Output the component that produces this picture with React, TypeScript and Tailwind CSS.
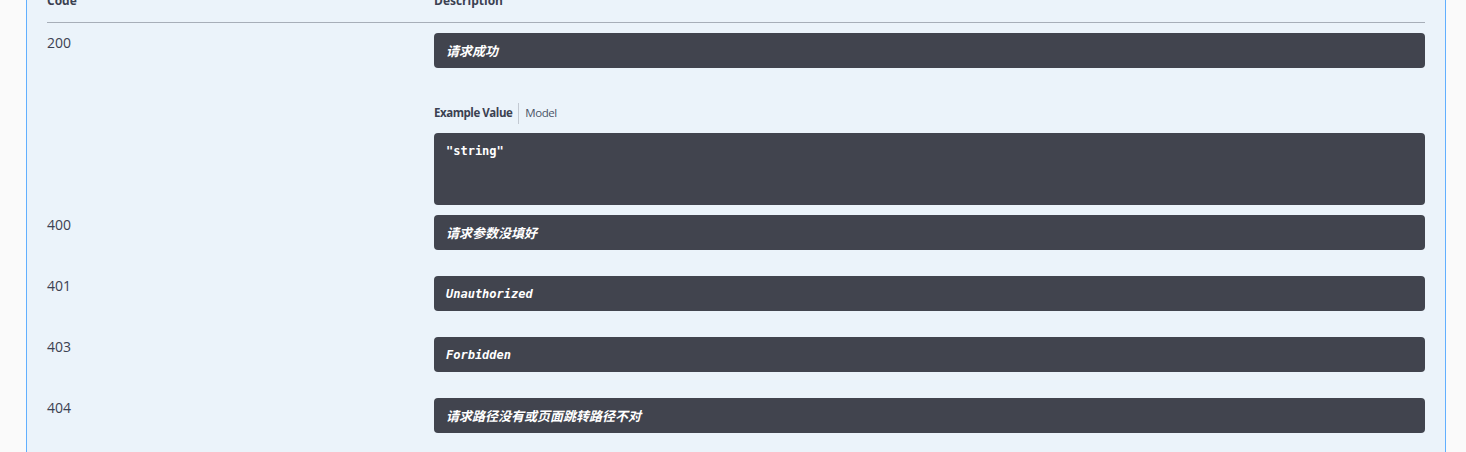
import React from "react";

const sans = "font-['Open_Sans','Noto_Sans_CJK_SC',sans-serif]";
const mono = "font-['DejaVu_Sans_Mono','Liberation_Mono','Noto_Sans_CJK_SC',monospace]";

function Desc({ text, cjk }: { text: string; cjk?: boolean }) {
  return (
    <div
      className={`h-[35px] rounded-[4px] bg-[#41444e] pl-[12px] flex items-center text-white font-bold italic ${
        cjk ? "text-[13px] font-['Noto_Sans_CJK_SC',sans-serif]" : `text-[12px] ${mono}`
      }`}
    >
      {text}
    </div>
  );
}

function Row({
  code,
  text,
  cjk,
  pt,
  children,
}: {
  code: string;
  text: string;
  cjk?: boolean;
  pt: string;
  children?: React.ReactNode;
}) {
  return (
    <div className={`flex ${pt} ${children ? "" : "pb-[15px]"}`}>
      <div className={`w-[387px] shrink-0 text-[14px] leading-[20px] text-[#3b4151] ${sans}`}>{code}</div>
      <div className="flex-1 min-w-0">
        <Desc text={text} cjk={cjk} />
        {children}
      </div>
    </div>
  );
}

export default function App() {
  return (
    <div className="w-[1466px] h-[452px] bg-[#fafafa] overflow-hidden pl-[26px] pr-[20px]">
      <div className="h-[480px] border-x border-[#61affe] bg-[#ebf3fa] px-[20px]">
        <div
          className={`flex -mt-[9px] pb-[11px] border-b border-[#a7aeb8] text-[12px] leading-[20px] font-bold text-[#3b4151] ${sans}`}
        >
          <div className="w-[387px] shrink-0">Code</div>
          <div>Description</div>
        </div>
        <Row code="200" text="请求成功" cjk pt="pt-[10px]">
          <div className={`mt-[35px] flex items-center h-[20px] text-[11.5px] tracking-[-0.45px] text-[#3b4151] ${sans}`}>
            <span className="font-bold pr-[6px]">Example Value</span>
            <span className="h-[21px] border-l border-[#c3c9d2]" />
            <span className="pl-[6px] text-[#4a5366]">Model</span>
          </div>
          <div
            className={`mt-[10px] h-[72px] rounded-[4px] bg-[#41444e] pl-[12px] pt-[8px] text-white text-[12px] leading-[20px] font-bold ${mono}`}
          >
            "string"
          </div>
        </Row>
        <Row code="400" text="请求参数没填好" cjk pt="pt-[10px]" />
        <Row code="401" text="Unauthorized" pt="pt-[11px]" />
        <Row code="403" text="Forbidden" pt="pt-[11px]" />
        <Row code="404" text="请求路径没有或页面跳转路径不对" cjk pt="pt-[11px]" />
      </div>
    </div>
  );
}
